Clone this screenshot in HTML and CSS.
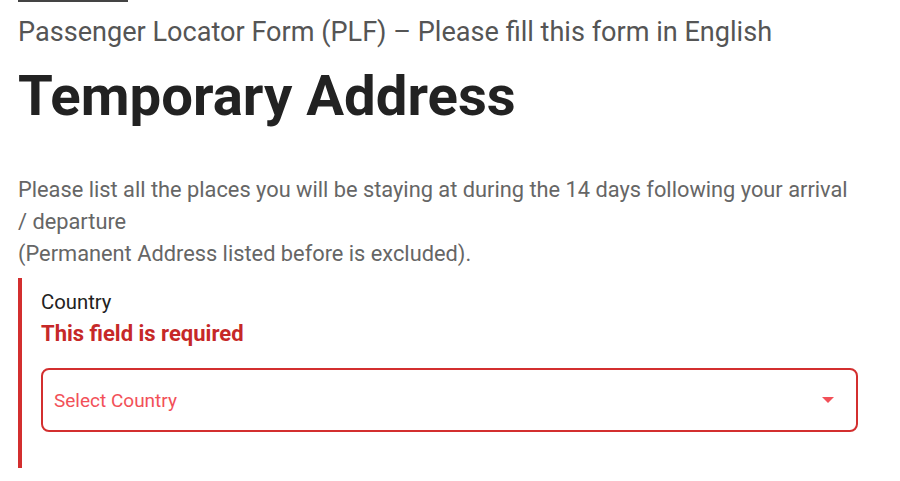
FILE: index.html
```html
<!DOCTYPE html>
<html lang="en">
<head>
<meta charset="utf-8">
<link rel="stylesheet" href="styles.css">
</head>
<body>
<main class="page">
  <div class="rule"></div>
  <p class="subtitle">Passenger Locator Form (PLF) – Please fill this form in English</p>
  <h1 class="title">Temporary Address</h1>
  <p class="intro">Please list all the places you will be staying at during the 14 days following your arrival / departure<br>(Permanent Address listed before is excluded).</p>
  <div class="field field-error">
    <label class="label">Country</label>
    <div class="error">This field is required</div>
    <div class="select">
      <span class="placeholder">Select Country</span>
      <span class="caret"></span>
    </div>
  </div>
</main>
</body>
</html>
```

FILE: styles.css
```css
* { box-sizing: border-box; }
html, body { margin: 0; padding: 0; background: #fff; }
body { font-family: Roboto, "Noto Sans", sans-serif; }
.page { width: 858px; padding-left: 18px; }
.rule { width: 110px; height: 2px; background: #444; }
.subtitle { margin: 14px 0 0; font-size: 27.1px; line-height: 32px; color: #555; }
.title { margin: 16px 0 0; font-size: 56.3px; line-height: 64px; font-weight: 700; color: #222; }
.intro { margin: 46px 0 0; font-size: 21.8px; line-height: 32px; color: #666; }
.field { margin-top: 8px; border-left: 4px solid #d32f2f; padding: 12px 0 36px 19px; }
.label { display: block; font-size: 20.3px; line-height: 24px; color: #222; }
.error { margin-top: 6px; font-size: 22px; line-height: 28px; font-weight: 700; color: #c62828; }
.select { margin-top: 20px; height: 64px; border: 2px solid #d32f2f; border-radius: 8px; display: flex; align-items: center; justify-content: space-between; padding: 0 22px 0 11px; }
.placeholder { font-size: 19px; color: #f25058; }
.caret { width: 0; height: 0; border-left: 6px solid transparent; border-right: 6px solid transparent; border-top: 6px solid #f25058; }
```
